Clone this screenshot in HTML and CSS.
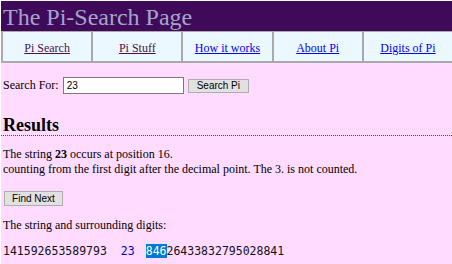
FILE: index.html
```html
<!DOCTYPE html>
<html>
<head>
<meta charset="utf-8">
<title>The Pi-Search Page</title>
<link rel="stylesheet" href="styles.css">
</head>
<body>
<div class="page">
  <h1 class="title">The Pi-Search Page</h1>
  <nav class="nav">
    <div class="cell"><a class="visited" href="#">Pi Search</a></div>
    <div class="cell"><a class="visited" href="#">Pi Stuff</a></div>
    <div class="cell"><a href="#">How it works</a></div>
    <div class="cell"><a href="#">About Pi</a></div>
    <div class="cell"><a href="#">Digits of Pi</a></div>
  </nav>
  <div class="content">
    <form class="search">
      <label class="label">Search For:</label>
      <input class="field" type="text" value="23">
      <button class="btn" type="button">Search Pi</button>
    </form>
    <h2 class="results">Results</h2>
    <p class="msg">The string <b>23</b> occurs at position 16.<br>counting from the first digit after the decimal point. The 3. is not counted.</p>
    <button class="btn next" type="button">Find Next</button>
    <p class="sub">The string and surrounding digits:</p>
    <div class="digits">141592653589793<span class="hit">23</span><span class="sel">846</span>26433832795028841</div>
  </div>
</div>
</body>
</html>
```
FILE: styles.css
```css
html, body {
  margin: 0;
  padding: 0;
  background: #ffffff;
}
.page {
  margin: 1px 0 0 1px;
  height: 263px;
  background: #ffdcff;
  font-family: "Liberation Serif", "Times New Roman", serif;
  font-size: 12px;
  line-height: 15px;
  color: #000;
  overflow: hidden;
}
.title {
  margin: 0;
  height: 30px;
  padding: 2px 0 0 2px;
  box-sizing: border-box;
  background: #400a5a;
  color: #a3a6c9;
  font-weight: normal;
  font-size: 24px;
  line-height: 28px;
}
.nav {
  display: grid;
  grid-template-columns: repeat(5, 1fr);
  column-gap: 2px;
  padding: 1px 0 2px 2px;
  background: #a9a9a9;
}
.cell {
  background: #ecf8ff;
  text-align: center;
  padding: 9px 0 5px;
}
.cell a {
  color: #0000ee;
}
.cell a.visited {
  color: #4a1048;
}
.content {
  padding: 0 0 0 2px;
}
.search {
  display: flex;
  align-items: center;
  gap: 4px;
  margin: 14px 0 0;
}
.field {
  width: 121px;
  height: 17px;
  box-sizing: border-box;
  margin: 0;
  padding: 0 3px;
  border: 1px solid #7a7a7a;
  background: #fff;
  font-family: "Liberation Sans", Arial, sans-serif;
  font-size: 10px;
}
.btn {
  margin: 0;
  height: 14px;
  padding: 0 8px;
  border: 1px solid #adadad;
  background: #e1e1e1;
  color: #000;
  font-family: "Liberation Sans", Arial, sans-serif;
  font-size: 10px;
  line-height: 12px;
}
.results {
  margin: 21px 0 0 -2px;
  padding-left: 2px;
  font-size: 18px;
  line-height: 20px;
  font-weight: bold;
  border-bottom: 1px dotted #ff0000;
}
.msg {
  margin: 11px 0 0;
}
.next {
  display: block;
  margin: 14px 0 0 1px;
  height: 15px;
  width: 59px;
  padding: 0;
}
.sub {
  margin: 12px 0 0;
}
.digits {
  margin: 11px 0 0;
  font-family: "DejaVu Sans Mono", "Liberation Mono", monospace;
  font-size: 11.5px;
  line-height: 15px;
  color: #101020;
  white-space: pre;
}
.hit {
  color: #0000c8;
  margin: 0 11px 0 14px;
}
.sel {
  background: #0078d7;
  color: #fff;
}
```
